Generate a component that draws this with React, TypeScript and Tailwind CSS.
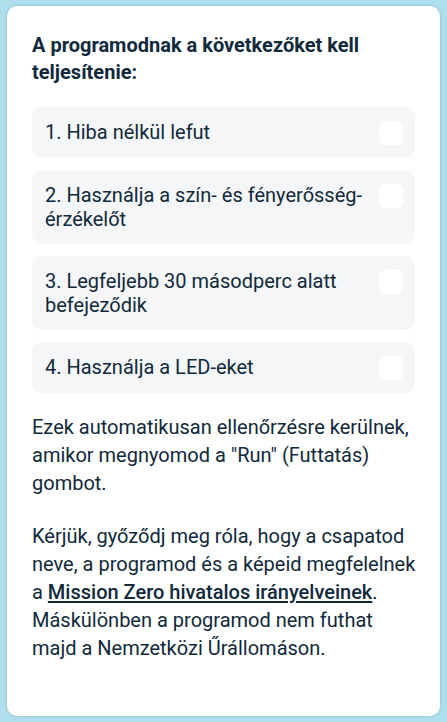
const items = [
  "1. Hiba nélkül lefut",
  "2. Használja a szín- és fényerősség-érzékelőt",
  "3. Legfeljebb 30 másodperc alatt befejeződik",
  "4. Használja a LED-eket",
];

export default function App() {
  return (
    <div
      className="h-[722px] bg-[#afdfec] px-[7px] pt-[6px] pb-[6px] flex"
      style={{ fontFamily: "Roboto, 'Noto Sans', sans-serif" }}
    >
      <div className="flex-1 bg-white rounded-[10px] shadow-[0_0_3px_rgba(60,120,140,0.35)] px-[25px] pt-[26px] text-[#10293b]">
        <h2 className="text-[20px] leading-[27px] font-bold">
          A programodnak a következőket kell teljesítenie:
        </h2>

        <div className="mt-[21px] flex flex-col gap-[12px]">
          {items.map((text) => (
            <div
              key={text}
              className="flex items-start justify-between gap-4 bg-[#f5f6f8] rounded-[10px] pl-[13px] pr-[12px] py-[13px]"
            >
              <span className="text-[20px] leading-[24px]">{text}</span>
              <span className="shrink-0 w-[24px] h-[24px] mt-px bg-white rounded-[6px]" />
            </div>
          ))}
        </div>

        <div className="mr-[-4px] text-[20px] leading-[28px]">
          <p className="mt-[20px]">
            Ezek automatikusan ellenőrzésre kerülnek, amikor megnyomod a "Run"
            (Futtatás) gombot.
          </p>

          <p className="mt-[25px]">
            Kérjük, győződj meg róla, hogy a csapatod neve, a programod és a
            képeid megfelelnek a{" "}
            <a
              href="#"
              className="font-medium underline decoration-2 underline-offset-2"
            >
              Mission Zero hivatalos irányelveinek
            </a>
            . Máskülönben a programod nem futhat
            <br />
            majd a Nemzetközi Űrállomáson.
          </p>
        </div>
      </div>
    </div>
  );
}
